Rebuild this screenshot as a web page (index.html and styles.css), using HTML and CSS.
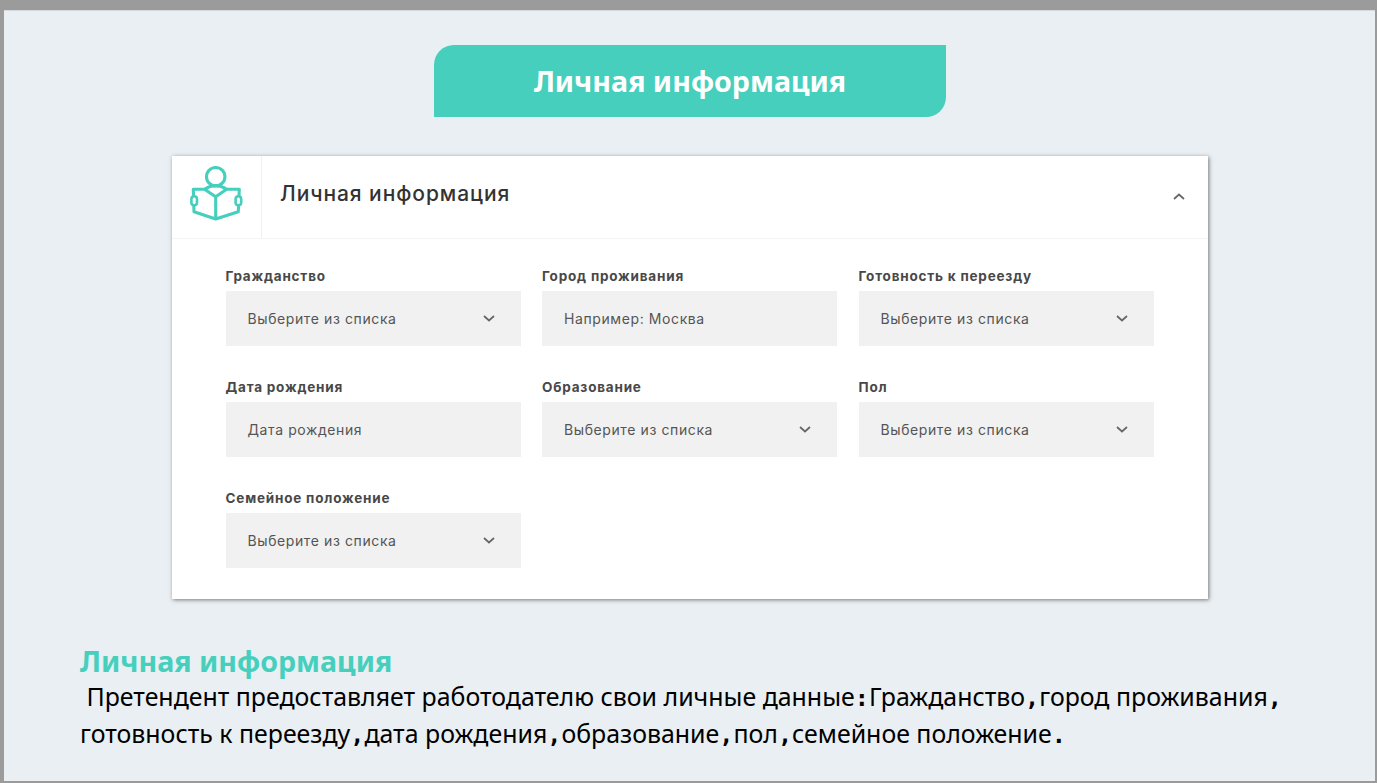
FILE: index.html
```html
<!DOCTYPE html>
<html lang="ru">
<head>
<meta charset="utf-8">
<title>Личная информация</title>
<link rel="stylesheet" href="styles.css">
</head>
<body>
<main class="slide">
  <h1 class="banner">Личная информация</h1>
  <section class="panel">
    <header class="panel-head">
      <div class="panel-icon">
        <svg class="reader" viewBox="0 0 55 55" width="55" height="55" fill="none" stroke="#46cfbd" stroke-width="3.1" stroke-linejoin="round" stroke-linecap="round">
          <circle cx="26.7" cy="10.7" r="9.2"/>
          <path d="M26.7 53V30.7L15.5 23.3H4.3L5 45.7L26.7 53L49.3 45.7L50.3 23.3H37.7L26.7 30.7M15.5 23.3Q26.7 16 37.7 23.3"/>
          <rect class="hand" x="2.4" y="30.3" width="5.6" height="9" rx="2.8"/>
          <rect class="hand" x="46.6" y="30.3" width="5.6" height="9" rx="2.8"/>
        </svg>
      </div>
      <h2 class="panel-title">Личная информация</h2>
      <svg class="chev chev-up" viewBox="0 0 12 7" width="12" height="7" fill="none" stroke="#666" stroke-width="1.7"><path d="M1 6L6 1.5L11 6"/></svg>
    </header>
    <div class="fields">
      <div class="field"><span class="label">Гражданство</span><div class="input"><span>Выберите из списка</span><svg class="chev" viewBox="0 0 12 7" width="12" height="7" fill="none" stroke="#666" stroke-width="1.7"><path d="M1 1L6 5.5L11 1"/></svg></div></div>
      <div class="field"><span class="label">Город проживания</span><div class="input"><span>Например: Москва</span></div></div>
      <div class="field"><span class="label">Готовность к переезду</span><div class="input"><span>Выберите из списка</span><svg class="chev" viewBox="0 0 12 7" width="12" height="7" fill="none" stroke="#666" stroke-width="1.7"><path d="M1 1L6 5.5L11 1"/></svg></div></div>
      <div class="field"><span class="label">Дата рождения</span><div class="input"><span>Дата рождения</span></div></div>
      <div class="field"><span class="label">Образование</span><div class="input"><span>Выберите из списка</span><svg class="chev" viewBox="0 0 12 7" width="12" height="7" fill="none" stroke="#666" stroke-width="1.7"><path d="M1 1L6 5.5L11 1"/></svg></div></div>
      <div class="field"><span class="label">Пол</span><div class="input"><span>Выберите из списка</span><svg class="chev" viewBox="0 0 12 7" width="12" height="7" fill="none" stroke="#666" stroke-width="1.7"><path d="M1 1L6 5.5L11 1"/></svg></div></div>
      <div class="field"><span class="label">Семейное положение</span><div class="input"><span>Выберите из списка</span><svg class="chev" viewBox="0 0 12 7" width="12" height="7" fill="none" stroke="#666" stroke-width="1.7"><path d="M1 1L6 5.5L11 1"/></svg></div></div>
    </div>
  </section>
  <section class="about">
    <h3 class="about-title">Личная информация</h3>
    <p class="about-text">&nbsp;Претендент предоставляет работодателю свои личные данные<span class="punct">:</span>Гражданство<span class="punct">,</span>город проживания<span class="punct">,</span><br>готовность к переезду<span class="punct">,</span>дата рождения<span class="punct">,</span>образование<span class="punct">,</span>пол<span class="punct">,</span>семейное положение<span class="punct">.</span></p>
  </section>
</main>
</body>
</html>
```
FILE: styles.css
```css
* { box-sizing: border-box; }
html, body { height: 100%; }
body {
  margin: 0;
  padding: 10px 2px 2px 4px;
  background: #9b9b9b;
  overflow: hidden;
}
.slide {
  height: 771px;
  background: #e9eff3;
  border-top: 1px solid #d5d9dd;
  padding-top: 34px;
  display: flex;
  flex-direction: column;
  font-family: "Noto Sans", sans-serif;
}
.banner {
  align-self: flex-start;
  margin: 0 0 0 430px;
  width: 512px;
  height: 72px;
  background: #46cfbd;
  border-radius: 20px 0 20px 0;
  color: #fff;
  font-family: "Noto Sans", sans-serif;
  font-size: 28.6px;
  font-weight: 700;
  line-height: 72px;
  text-align: center;
}
.panel {
  align-self: flex-start;
  margin: 39px 0 0 168px;
  width: 1036px;
  height: 443px;
  background: #fff;
  box-shadow: 1px 1px 4px rgba(60, 60, 60, .65);
}
.panel-head {
  height: 83px;
  display: flex;
  align-items: center;
  border-bottom: 1px solid #f2f4f5;
  padding-right: 23px;
}
.panel-icon {
  width: 90px;
  height: 100%;
  border-right: 1px solid #eef1f2;
  display: flex;
  align-items: center;
  justify-content: center;
  padding-bottom: 8px;
}
.reader { display: block; }
.hand { fill: #fff; stroke-width: 2.6; }
.panel-title {
  flex: 1;
  margin: 0 0 7px 18px;
  font-family: "Inter", sans-serif;
  font-size: 21px;
  font-weight: 500;
  letter-spacing: .93px;
  color: #333;
}
.fields {
  display: grid;
  grid-template-columns: repeat(3, 295px);
  column-gap: 21.5px;
  row-gap: 33px;
  padding: 29px 0 0 53.5px;
}
.field { display: flex; flex-direction: column; }
.label {
  height: 23px;
  font-family: "Inter", sans-serif;
  font-size: 13.5px;
  font-weight: 700;
  line-height: 17px;
  letter-spacing: .8px;
  color: #484848;
}
.input {
  height: 55px;
  background: #f1f1f1;
  display: flex;
  align-items: center;
  justify-content: space-between;
  padding: 0 26px 1px 22px;
  font-family: "Inter", sans-serif;
  font-size: 14px;
  letter-spacing: .6px;
  color: #555;
}
.chev { display: block; flex: none; }
.chev-up { margin-bottom: 2px; }
.about { margin: 43px 0 0 76px; }
.about-title {
  margin: 0;
  color: #46cfbd;
  font-family: "Noto Sans", sans-serif;
  font-size: 28.6px;
  font-weight: 700;
  line-height: 37px;
}
.about-text {
  margin: 0;
  color: #000;
  font-family: "Noto Sans", sans-serif;
  font-size: 24.9px;
  line-height: 34.5px;
}
.punct { font-family: "DejaVu Sans Mono", monospace; font-weight: 700; font-size: 23.5px; }
```
